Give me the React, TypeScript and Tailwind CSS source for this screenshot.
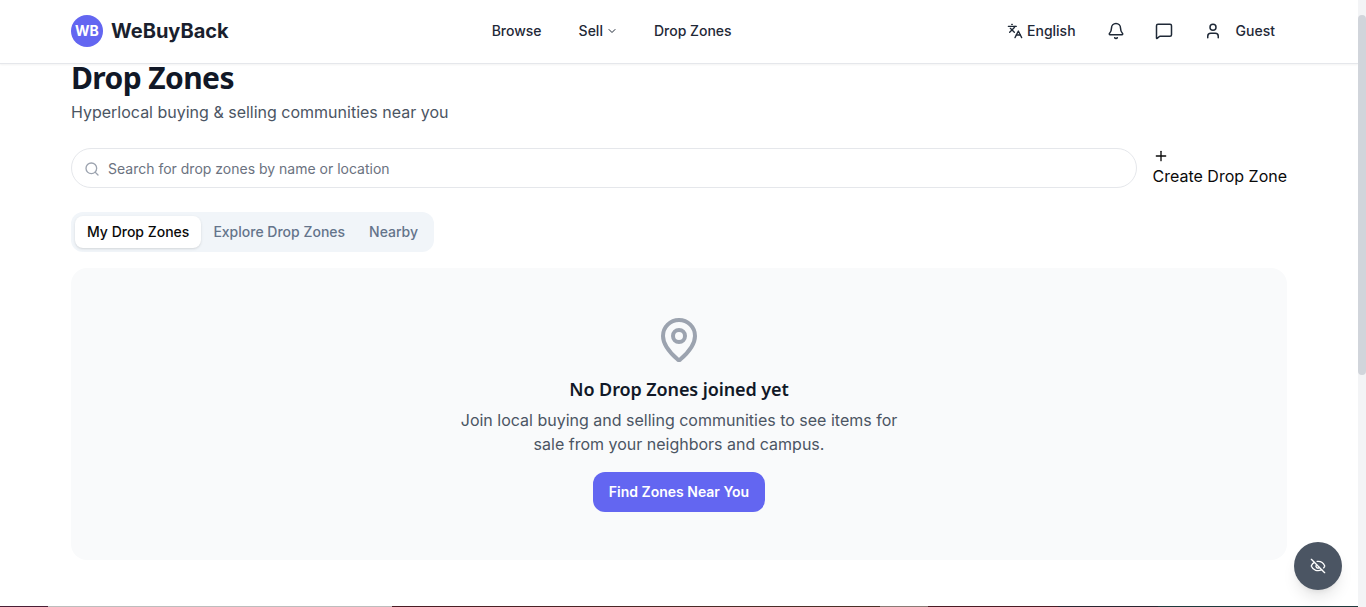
import { Bell, ChevronDown, EyeOff, Languages, MapPin, MessageSquare, Plus, Search, User } from "lucide-react";

const stripColors = [
  "w-[48px] bg-[#4a1f35]",
  "w-[344px] bg-[#bdbdbd]",
  "w-[488px] bg-linear-to-r from-[#4a1c24] to-[#4a3228]",
  "w-[48px] bg-[#8a7a75]",
  "w-[130px] bg-[#4a1c24]",
  "w-[100px] bg-[#2a2530]",
  "flex-1 bg-[#1f3a3c]",
];

const Header = () => (
  <header className="flex h-16 shrink-0 items-center border-b border-[#e5e7eb] bg-white px-[71px] pb-px shadow-xs">
    <div className="flex items-center gap-2">
      <div className="flex h-8 w-8 items-center justify-center rounded-full bg-[#6366f1] text-sm font-bold text-white">WB</div>
      <span className="text-xl font-bold text-[#1a1f2e]">WeBuyBack</span>
    </div>

    <nav className="ml-[263px] flex items-center text-sm font-medium text-[#1f2937]">
      <a>Browse</a>
      <a className="ml-[37px] flex items-center gap-[3px]">
        Sell
        <ChevronDown size={12} />
      </a>
      <a className="ml-9">Drop Zones</a>
    </nav>

    <div className="ml-auto flex items-center gap-2 text-sm font-medium text-[#1f2937]">
      <button className="flex items-center gap-1 px-3">
        <Languages size={16} />
        English
      </button>
      <button className="flex h-10 w-10 items-center justify-center">
        <Bell size={18} />
      </button>
      <button className="flex h-10 w-10 items-center justify-center">
        <MessageSquare size={18} />
      </button>
      <button className="flex items-center gap-[14px] px-3">
        <User size={18} />
        Guest
      </button>
    </div>
  </header>
);

const EmptyState = () => (
  <div className="mt-4 flex flex-col items-center rounded-2xl bg-[#f9fafb] py-12 text-center">
    <MapPin size={48} strokeWidth={2} className="mb-3 text-[#9ca3af]" />
    <h3 className="-mt-px mb-1 pb-px text-lg leading-7 font-semibold tracking-[-0.1px] text-[#111827] [font-family:'Noto_Sans',sans-serif]">No Drop Zones joined yet</h3>
    <p className="mb-4 max-w-md text-base text-[#4b5563]">
      Join local buying and selling communities to see items for sale from your neighbors and campus.
    </p>
    <button className="h-10 rounded-xl bg-[#6366f1] px-4 text-sm font-semibold text-white">Find Zones Near You</button>
  </div>
);

export default function App() {
  return (
    <div className="relative flex h-[607px] overflow-hidden bg-white [font-family:Inter,sans-serif]">
      <div className="flex min-w-0 flex-1 flex-col">
        <Header />
        <main className="-mt-1 flex-1 px-[71px]">
          <h1 className="text-3xl font-bold tracking-[-0.6px] text-[#111827] [font-family:'Noto_Sans',sans-serif]">Drop Zones</h1>
          <p className="mt-1 text-base text-[#4b5563]">Hyperlocal buying &amp; selling communities near you</p>

          <div className="mt-6 flex items-center gap-4">
            <div className="flex h-10 flex-1 items-center gap-2 rounded-full border border-[#e5e7eb] bg-white pt-px pl-3 text-sm text-[#6b7280]">
              <Search size={16} className="text-[#9ca3af]" />
              <span>Search for drop zones by name or location</span>
            </div>
            <button className="text-left text-base text-[#0a0a0a]">
              <Plus size={16} />
              Create Drop Zone
            </button>
          </div>

          <div className="mt-6 flex h-10 w-fit items-center rounded-xl bg-[#f1f5f9] p-1 text-sm font-medium text-[#64748b]">
            <button className="h-8 rounded-lg bg-white px-3 text-[#0a0a0a] shadow-sm">My Drop Zones</button>
            <button className="h-8 px-3">Explore Drop Zones</button>
            <button className="h-8 px-3">Nearby</button>
          </div>

          <EmptyState />
        </main>
        <div className="flex h-px shrink-0">
          {stripColors.map((c) => (
            <div key={c} className={c} />
          ))}
        </div>
      </div>

      <div className="w-2 shrink-0 bg-[#f3f4f6] pt-[15px]">
        <div className="h-[360px] rounded-full bg-[#d1d5db]" />
      </div>

      <button className="absolute right-6 bottom-[17px] flex h-12 w-12 items-center justify-center rounded-full bg-[#4b5563] text-white shadow-lg">
        <EyeOff size={16} />
      </button>
    </div>
  );
}
